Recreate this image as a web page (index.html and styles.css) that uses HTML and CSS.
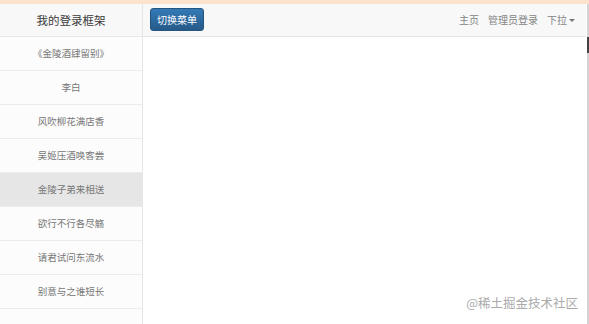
FILE: index.html
```html
<!DOCTYPE html>
<html lang="zh-CN">
<head>
<meta charset="UTF-8" />
<meta name="viewport" content="width=device-width, initial-scale=1" />
<title>我的登录框架</title>
<link rel="stylesheet" href="styles.css">
</head>
<body>

<div class="topbar"></div>

<div class="app">
  <aside class="sidebar">
    <div class="brand">我的登录框架</div>
    <ul class="menu">
      <li>《金陵酒肆留别》</li>
      <li>李白</li>
      <li>风吹柳花满店香</li>
      <li>吴姬压酒唤客尝</li>
      <li class="active">金陵子弟来相送</li>
      <li>欲行不行各尽觞</li>
      <li>请君试问东流水</li>
      <li>别意与之谁短长</li>
    </ul>
  </aside>

  <div class="main">
    <nav class="navbar">
      <button class="btn-toggle">切换菜单</button>
      <ul class="nav-links">
        <li>主页</li>
        <li>管理员登录</li>
        <li>下拉<span class="caret"></span></li>
      </ul>
    </nav>
    <div class="content"></div>
  </div>

  <div class="scroll"><div class="thumb"></div></div>
</div>

<div class="watermark">@稀土掘金技术社区</div>

</body>
</html>
```

FILE: styles.css
```css
html, body {
  height: 100%;
}
body {
  margin: 0;
  font-family: "Noto Sans CJK SC", "Noto Sans", sans-serif;
  background: #fff;
  color: #555;
  display: flex;
  flex-direction: column;
  overflow: hidden;
}
.topbar {
  height: 4px;
  background: #fbe3cd;
  flex: none;
}
.app {
  flex: 1;
  display: flex;
}
.sidebar {
  width: 142px;
  border-right: 1px solid #e6e6e6;
  background: #fcfcfc;
  flex: none;
}
.brand {
  height: 32px;
  line-height: 32px;
  text-align: center;
  font-size: 11.5px;
  color: #3a3a3a;
  background: #f8f8f8;
  border-bottom: 1px solid #e8e8e8;
}
.menu {
  list-style: none;
  margin: 0;
  padding: 0;
}
.menu li {
  height: 33px;
  line-height: 33px;
  text-align: center;
  font-size: 9.5px;
  color: #777;
  border-bottom: 1px solid #ececec;
}
.menu li.active {
  background: #e6e6e6;
}
.main {
  flex: 1;
  display: flex;
  flex-direction: column;
}
.navbar {
  height: 32px;
  background: #f8f8f8;
  border-bottom: 1px solid #e6e6e6;
  display: flex;
  align-items: center;
  justify-content: space-between;
  padding: 0 11px 0 7px;
}
.btn-toggle {
  height: 23px;
  width: 54px;
  margin-top: -2px;
  padding: 0;
  border: 1px solid #245580;
  border-radius: 3px;
  background: linear-gradient(#337ab7, #265a88);
  color: #fff;
  font-family: inherit;
  font-size: 10px;
}
.nav-links {
  list-style: none;
  margin: 0 0 2px 0;
  padding: 0;
  display: flex;
  gap: 9px;
  font-size: 10px;
  color: #858585;
}
.caret {
  display: inline-block;
  margin-left: 2px;
  vertical-align: middle;
  border-top: 3px solid #777;
  border-left: 3px solid transparent;
  border-right: 3px solid transparent;
}
.content {
  flex: 1;
}
.scroll {
  width: 2px;
  background: #d4d4d4;
  flex: none;
  margin-left: 1px;
}
.thumb {
  height: 16px;
  margin-top: 33px;
  background: #444;
}
.watermark {
  position: absolute;
  right: 11px;
  bottom: 12px;
  font-size: 12.5px;
  color: #aaa;
}
```
